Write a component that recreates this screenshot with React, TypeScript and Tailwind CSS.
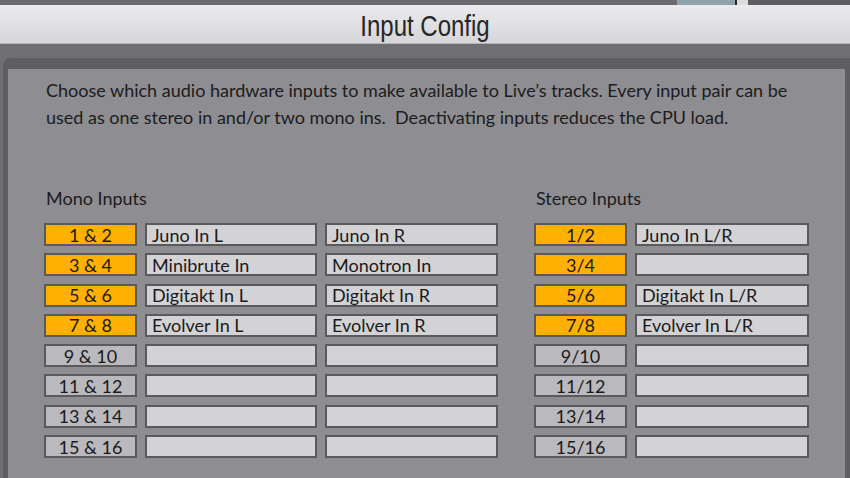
const MONO = [
  { n: '1 & 2', l: 'Juno In L', r: 'Juno In R', on: true },
  { n: '3 & 4', l: 'Minibrute In', r: 'Monotron In', on: true },
  { n: '5 & 6', l: 'Digitakt In L', r: 'Digitakt In R', on: true },
  { n: '7 & 8', l: 'Evolver In L', r: 'Evolver In R', on: true },
  { n: '9 & 10', l: '', r: '', on: false },
  { n: '11 & 12', l: '', r: '', on: false },
  { n: '13 & 14', l: '', r: '', on: false },
  { n: '15 & 16', l: '', r: '', on: false },
]

const STEREO = [
  { n: '1/2', name: 'Juno In L/R', on: true },
  { n: '3/4', name: '', on: true },
  { n: '5/6', name: 'Digitakt In L/R', on: true },
  { n: '7/8', name: 'Evolver In L/R', on: true },
  { n: '9/10', name: '', on: false },
  { n: '11/12', name: '', on: false },
  { n: '13/14', name: '', on: false },
  { n: '15/16', name: '', on: false },
]

function NumBox({ label, on }: { label: string; on: boolean }) {
  return (
    <div
      className={`h-[23px] border-2 border-[#5a5a5d] flex items-center justify-center text-[18px] text-[#1a1a1a] leading-none ${
        on ? 'bg-[#ffb000]' : 'bg-[#bab9bd]'
      }`}
    >
      {label}
    </div>
  )
}

function NameBox({ label }: { label: string }) {
  return (
    <div className="h-[23px] border-2 border-[#5a5a5d] bg-[#d3d2d5] flex items-center pl-[5px] text-[18px] text-[#1a1a1a] leading-none">
      {label}
    </div>
  )
}

export default function App() {
  return (
    <div className="w-[850px] h-[478px] overflow-hidden bg-[#6f6f73] flex flex-col" style={{ fontFamily: 'Lato, "Open Sans", sans-serif' }}>
      {/* strip of the window behind */}
      <div className="h-[5px] bg-[#6a6a6e] flex shrink-0">
        <div className="w-[677px]" />
        <div className="w-[58px] bg-[#8fa3aa]" />
        <div className="w-[2px] bg-[#2a2a2a]" />
        <div className="w-[11px] bg-[#dedede]" />
        <div className="flex-1 bg-[#5e5e62]" />
      </div>

      {/* title bar */}
      <div className="h-[39px] shrink-0 bg-gradient-to-b from-[#ebeaed] to-[#d6d5d8] border-b border-[#b4b4b6] flex items-center justify-center pt-[3px]">
        <span
          className="inline-block text-[24px] text-[#262626] scale-y-[1.25] leading-none"
          style={{ fontFamily: '"Liberation Sans", Arial, sans-serif' }}
        >
          Input Config
        </span>
      </div>

      <div className="h-[14px] shrink-0" />

      {/* panel */}
      <div className="flex-1 ml-[3px] bg-[#5e5e62] rounded-tl-[8px] pl-[5px] pr-[5px] pt-[11px]">
        <div className="h-full bg-[#8e8d92] pl-[36px] pt-[8px]">
          <p className="ml-[2px] text-[18px] leading-[27px] text-[#1c1c1c] whitespace-pre">
            {'Choose which audio hardware inputs to make available to Live’s tracks. Every input pair can be\nused as one stereo in and/or two mono ins.  Deactivating inputs reduces the CPU load.'}
          </p>

          <div className="flex mt-[57px]">
            <div>
              <div className="ml-[2px] text-[18px] leading-[20px] text-[#1c1c1c] h-[20px]">Mono Inputs</div>
              <div className="mt-[15px] grid grid-cols-[93px_172px_173px] gap-x-2 gap-y-[7.3px]">
                {MONO.map((r) => (
                  <>
                    <NumBox key={r.n} label={r.n} on={r.on} />
                    <NameBox label={r.l} />
                    <NameBox label={r.r} />
                  </>
                ))}
              </div>
            </div>

            <div className="ml-[36px]">
              <div className="ml-[2px] text-[18px] leading-[20px] text-[#1c1c1c] h-[20px]">Stereo Inputs</div>
              <div className="mt-[15px] grid grid-cols-[93px_174px] gap-x-2 gap-y-[7.3px]">
                {STEREO.map((r) => (
                  <>
                    <NumBox key={r.n} label={r.n} on={r.on} />
                    <NameBox label={r.name} />
                  </>
                ))}
              </div>
            </div>
          </div>
        </div>
      </div>
    </div>
  )
}
